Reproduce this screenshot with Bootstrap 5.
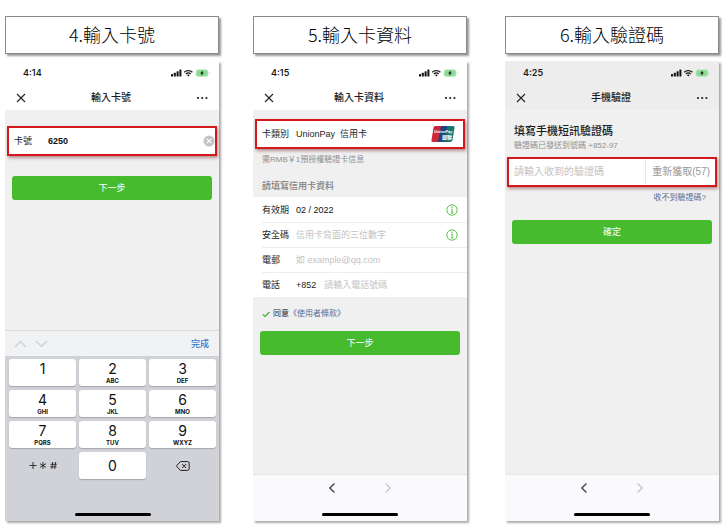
<!DOCTYPE html>
<html lang="zh-Hant">
<head>
<meta charset="utf-8">
<meta name="viewport" content="width=device-width, initial-scale=1">
<title>輸入卡資料</title>
<link href="https://cdn.jsdelivr.net/npm/bootstrap@5.3.0/dist/css/bootstrap.min.css" rel="stylesheet">
<style>
  body { font-family: "Liberation Sans", "Noto Sans CJK TC", sans-serif; font-size: 9px; line-height: 10px; color: #1c1c1c; background: #fff; }
  .steps { display: grid; grid-template-columns: minmax(0,1fr) 34px minmax(0,1fr) 38px minmax(0,1fr); padding: 16px 9px 6px 5px; }
  .step:nth-child(1) { grid-column: 1; }
  .step:nth-child(2) { grid-column: 3; }
  .step:nth-child(3) { grid-column: 5; }
  .step { gap: 7px; }
  .step-title { font-family: "Noto Sans CJK TC", sans-serif; font-weight: 300; font-size: 18px; line-height: 20px; height: 38px; padding-bottom: 2px; border: 1px solid #8a8a8a; box-shadow: 2px 2px 2px #999; color: #000; }
  .phone { background: #f0f0f0; box-shadow: 2px 2px 2px #aaa; }
  .topbar { background: #fff; }
  .topbar.plain { background: #ededed; }
  .statusbar { height: 24px; padding: 0 9px 0 18px; font: 600 9px/10px Inter, sans-serif; }
  .titlebar { height: 25px; padding: 0 11px; }
  .titlebar h2 { font-size: 10px; line-height: 12px; font-weight: 500; }
  .bare { border: 0; background: none; padding: 0; color: inherit; display: flex; align-items: center; justify-content: center; }
  .marked { height: 30px; margin: 0 2px; border: 2px solid #d3191c; background: #fff; box-shadow: 1px 2px 3px rgba(120,50,50,.5); padding-left: 5px; }
  .s1 { margin-top: 16px; } .s2 { margin-top: 9px; } .s3 { margin-top: 6px; }
  .lbl { width: 34px; flex: none; }
  .entry { border: 0; padding: 0; background: none; outline: 0; min-width: 0; width: 100%; color: #111; line-height: 14px; height: 14px; }
  .entry::placeholder { color: #c3c3c3; opacity: 1; }
  .go { height: 24px; margin: 0 7px; padding: 0; font-size: 9px; line-height: 12px; border: 0; border-radius: 3px; background: #46bb2e; color: #fff; }
  .go:hover { background: #3eaa28; color: #fff; }
  .b1 { margin-top: 20px; } .b2 { margin-top: 12px; } .b3 { margin-top: 17px; }
  .note { font-size: 8px; color: #8f8f8f; }
  .cardnote { margin: 6px 0 0; }
  .inset { padding-left: 9px; padding-right: 9px; }
  .form-rows { background: #fff; padding-left: 9px; }
  .form-row { height: 25px; padding-right: 9px; }
  .form-row + .form-row { border-top: 1px solid #ededed; }
  .formhead { font-size: 9px; line-height: 10px; color: #808080; margin: 16px 0 6px; }
  .consent { font-size: 8px; margin-top: 12px; gap: 3px; }
  .consent input { appearance: none; width: 8px; height: 8px; margin: 0; background: none; }
  .tickbox { position: relative; width: 8px; height: 8px; }
  .tickbox svg { position: absolute; inset: 0; pointer-events: none; }
  .legal { color: #5b6c92; text-decoration: none; }
  .bigtext { font-size: 11px; line-height: 14px; font-weight: 500; margin: 14px 0 3px; }
  .code { font-size: 10px; }
  .resend { font-size: 10px; color: #999; border-left: 1px solid #e8e8e8; flex: none; padding: 0 5px 0 6px; }
  .accessory { height: 26px; background: #f1f2f4; border-top: 1px solid #dcdcdc; padding: 0 10px 0 9px; color: #c9cacd; }
  .done { color: #2f7bd0; font-size: 9px; font-weight: 500; }
  .keypad { background: #d1d2d7; padding: 3px 3px 5px 4px; height: 165px; }
  .keys { display: grid; grid-template-columns: repeat(3, minmax(0,1fr)); grid-auto-rows: 27px; gap: 4px 3px; }
  .key { font: 400 14px/17px Inter, sans-serif; flex-direction: column; border-radius: 3px; color: #111; }
  .key.solid { background: #fff; box-shadow: 0 1px 1px #a5a6aa; }
  .key small { font: 700 6px/8px Inter, sans-serif; height: 8px; }
  .browserbar { height: 47px; background: #fafafc; border-top: 1px solid #e6e6e8; padding: 7px 0 5px; }
  .arrows { gap: 46px; }
  .homebar { width: 76px; height: 3px; border-radius: 2px; background: #000; }
</style>
<script src="https://cdn.jsdelivr.net/npm/bootstrap@5.3.0/dist/js/bootstrap.bundle.min.js"></script>
</head>
<body>
<svg class="d-none" aria-hidden="true">
  <symbol id="status" viewBox="0 0 39 10">
    <g fill="#111"><rect x="0" y="6" width="2" height="2.5" rx=".5"/><rect x="2.8" y="4.8" width="2" height="3.7" rx=".5"/><rect x="5.6" y="3.2" width="2" height="5.3" rx=".5"/><rect x="8.4" y="1.5" width="2" height="7" rx=".5"/></g>
    <g fill="none" stroke="#111" stroke-width="1.3"><path d="M13.2 4.2a6 6 0 0 1 8.2 0"/><path d="M14.9 6a3.6 3.6 0 0 1 4.8 0"/></g><path d="M15.9 7.1a2.1 2.1 0 0 1 2.8 0L17.3 8.6z" fill="#111"/>
    <rect x="25" y="1.8" width="12" height="6.6" rx="2" fill="#8bdc94" stroke="#bfe8c3" stroke-width=".8"/><path d="M38 3.8q1 1.2 0 2.6z" fill="#9ad9a0"/><path d="M31.6 2.2 29.2 5.4h1.5L30.3 8l2.5-3.4h-1.5z" fill="#111"/>
  </symbol>
  <symbol id="close" viewBox="0 0 10 10"><path d="M1 1l8 8M9 1 1 9" stroke="#222" stroke-width="1.1" fill="none"/></symbol>
  <symbol id="dots" viewBox="0 0 12 4"><g fill="#222"><circle cx="2" cy="2" r="1.1"/><circle cx="6.2" cy="2" r="1.1"/><circle cx="10.4" cy="2" r="1.1"/></g></symbol>
  <symbol id="info" viewBox="0 0 12 12"><circle cx="6" cy="6" r="5.2" fill="none" stroke="#5cc04c"/><path d="M5 5.2h1.2v3.6M4.8 8.9h2.7" fill="none" stroke="#5cc04c"/><circle cx="6" cy="3.3" r=".75" fill="#5cc04c"/></symbol>
  <symbol id="left" viewBox="0 0 10 12"><path d="M7.5 1.5 2.8 6l4.7 4.5" fill="none" stroke="#444" stroke-width="1.4"/></symbol>
  <symbol id="right" viewBox="0 0 10 12"><path d="M2.5 1.5 7.2 6l-4.7 4.5" fill="none" stroke="#c3c3c6" stroke-width="1.2"/></symbol>
</svg>

<main class="steps min-vh-100">
  <section class="step d-flex flex-column">
    <h1 class="step-title d-flex align-items-center justify-content-center m-0">4.輸入卡號</h1>
    <div class="phone d-flex flex-column flex-grow-1">
      <header class="topbar">
        <div class="statusbar d-flex align-items-center justify-content-between"><span>4:14</span><svg width="39" height="10"><use href="#status"/></svg></div>
        <div class="titlebar d-flex align-items-center justify-content-between"><button class="bare" aria-label="關閉"><svg width="10" height="10"><use href="#close"/></svg></button><h2 class="m-0">輸入卡號</h2><button class="bare" aria-label="更多"><svg width="12" height="4"><use href="#dots"/></svg></button></div>
      </header>
      <div class="marked s1 d-flex align-items-center">
        <label class="lbl" for="cardno">卡號</label>
        <input class="entry fw-bold" id="cardno" value="6250">
        <button class="bare flex-shrink-0" aria-label="清除"><svg width="12" height="12" viewBox="0 0 12 12"><circle cx="6" cy="6" r="5.5" fill="#c4c4c6"/><path d="M3.8 3.8l4.4 4.4M8.2 3.8 3.8 8.2" stroke="#fff" stroke-width="1.1"/></svg></button>
      </div>
      <button class="btn go b1">下一步</button>
      <div class="mt-auto">
        <div class="accessory d-flex align-items-center">
          <button class="bare me-2" aria-label="上一項"><svg width="13" height="8" viewBox="0 0 13 8"><path d="M1 7l5.5-5.5L12 7" fill="none" stroke="currentColor" stroke-width="1.1"/></svg></button>
          <button class="bare" aria-label="下一項"><svg width="13" height="8" viewBox="0 0 13 8"><path d="M1 1l5.5 5.5L12 1" fill="none" stroke="currentColor" stroke-width="1.1"/></svg></button>
          <button class="bare done ms-auto">完成</button>
        </div>
        <div class="keypad d-flex flex-column justify-content-between">
          <div class="keys">
            <button class="bare key solid">1<small></small></button>
            <button class="bare key solid">2<small>ABC</small></button>
            <button class="bare key solid">3<small>DEF</small></button>
            <button class="bare key solid">4<small>GHI</small></button>
            <button class="bare key solid">5<small>JKL</small></button>
            <button class="bare key solid">6<small>MNO</small></button>
            <button class="bare key solid">7<small>PQRS</small></button>
            <button class="bare key solid">8<small>TUV</small></button>
            <button class="bare key solid">9<small>WXYZ</small></button>
            <button class="bare key" aria-label="符號"><svg width="28" height="9" viewBox="0 0 28 9"><g fill="none" stroke="#222" stroke-width=".9"><path d="M.5 4.5h7M4 1v7M14 1v7M11 2.7l6 3.6M17 2.7l-6 3.6M23.8 1l-1 7M26.6 1l-1 7M21.5 3.3h6.3M21.2 5.8h6.3"/></g></svg></button>
            <button class="bare key solid">0</button>
            <button class="bare key" aria-label="刪除"><svg width="14" height="10" viewBox="0 0 14 10"><path d="M4.4.6h7.2q1.6 0 1.6 1.6v5.6q0 1.6-1.6 1.6H4.4L.8 5.6q-.5-.6 0-1.2zM6.2 3l4 4M10.2 3l-4 4" fill="none" stroke="#222"/></svg></button>
          </div>
          <div class="homebar mx-auto"></div>
        </div>
      </div>
    </div>
  </section>

  <section class="step d-flex flex-column">
    <h1 class="step-title d-flex align-items-center justify-content-center m-0">5.輸入卡資料</h1>
    <div class="phone d-flex flex-column flex-grow-1">
      <header class="topbar">
        <div class="statusbar d-flex align-items-center justify-content-between"><span>4:15</span><svg width="39" height="10"><use href="#status"/></svg></div>
        <div class="titlebar d-flex align-items-center justify-content-between"><button class="bare" aria-label="關閉"><svg width="10" height="10"><use href="#close"/></svg></button><h2 class="m-0">輸入卡資料</h2><button class="bare" aria-label="更多"><svg width="12" height="4"><use href="#dots"/></svg></button></div>
      </header>
      <div class="marked s2 d-flex align-items-center pe-2">
        <span class="lbl">卡類別</span><span>UnionPay&nbsp; 信用卡</span>
        <svg class="ms-auto" width="24" height="16" viewBox="0 0 24 16" role="img" aria-label="UnionPay 銀聯">
          <path d="M4 0h7L8 16H2Q0 16 .5 14L2.500 1.500Q3 0 4 0z" fill="#cf2538"/><path d="M10 0h7l-3 16H7z" fill="#1d447c"/><path d="M16.500 0H22q2 0 1.500 2l-2 12q-.5 2-2 2H13.500z" fill="#17776f"/>
          <text x="3" y="7" font-family="Liberation Sans" font-size="4" font-weight="700" font-style="italic" fill="#fff">UnionPay</text><text x="11" y="13" font-family="Noto Sans CJK TC" font-size="5" font-weight="700" fill="#fff">銀聯</text>
        </svg>
      </div>
      <p class="note inset cardnote">需RMB￥1預授權驗證卡信息</p>
      <h3 class="formhead inset">請填寫信用卡資料</h3>
      <div class="form-rows">
        <div class="form-row d-flex align-items-center"><label class="lbl" for="exp">有效期</label><input class="entry" id="exp" value="02 / 2022"><button class="bare" aria-label="有效期說明"><svg width="12" height="12"><use href="#info"/></svg></button></div>
        <div class="form-row d-flex align-items-center"><label class="lbl" for="cvv">安全碼</label><input class="entry" id="cvv" placeholder="信用卡背面的三位數字"><button class="bare" aria-label="安全碼說明"><svg width="12" height="12"><use href="#info"/></svg></button></div>
        <div class="form-row d-flex align-items-center"><label class="lbl" for="mail">電郵</label><input class="entry" id="mail" type="email" placeholder="如 example@qq.com"></div>
        <div class="form-row d-flex align-items-center"><label class="lbl" for="tel">電話</label><span class="me-2">+852</span><input class="entry" id="tel" type="tel" placeholder="請輸入電話號碼"></div>
      </div>
      <div class="consent inset d-flex align-items-center">
        <span class="tickbox d-flex"><input type="checkbox" id="agree" checked><svg width="8" height="8" viewBox="0 0 8 8"><path d="M.8 4.300 3 6.500 7.500 2" fill="none" stroke="#3fae2a" stroke-width="1.200"/></svg></span>
        <span><label for="agree">同意</label><a class="legal" href="#">《使用者條款》</a></span>
      </div>
      <button class="btn go b2">下一步</button>
      <nav class="browserbar mt-auto d-flex flex-column justify-content-between align-items-center">
        <div class="arrows d-flex"><button class="bare" aria-label="返回"><svg width="10" height="12"><use href="#left"/></svg></button><button class="bare" aria-label="前進"><svg width="10" height="12"><use href="#right"/></svg></button></div>
        <div class="homebar"></div>
      </nav>
    </div>
  </section>

  <section class="step d-flex flex-column">
    <h1 class="step-title d-flex align-items-center justify-content-center m-0">6.輸入驗證碼</h1>
    <div class="phone d-flex flex-column flex-grow-1">
      <header class="topbar plain">
        <div class="statusbar d-flex align-items-center justify-content-between"><span>4:25</span><svg width="39" height="10"><use href="#status"/></svg></div>
        <div class="titlebar d-flex align-items-center justify-content-between"><button class="bare" aria-label="關閉"><svg width="10" height="10"><use href="#close"/></svg></button><h2 class="m-0">手機驗證</h2><button class="bare" aria-label="更多"><svg width="12" height="4"><use href="#dots"/></svg></button></div>
      </header>
      <h3 class="bigtext inset">填寫手機短訊驗證碼</h3>
      <p class="note inset m-0">驗證碼已發送到號碼 +852-97</p>
      <div class="marked s3 d-flex align-items-stretch">
        <input class="entry code my-auto" aria-label="驗證碼" placeholder="請輸入收到的驗證碼">
        <button class="bare resend">重新獲取(57)</button>
      </div>
      <div class="note inset s3 text-end"><a class="legal me-1" href="#">收不到驗證碼?</a></div>
      <button class="btn go b3">確定</button>
      <nav class="browserbar mt-auto d-flex flex-column justify-content-between align-items-center">
        <div class="arrows d-flex"><button class="bare" aria-label="返回"><svg width="10" height="12"><use href="#left"/></svg></button><button class="bare" aria-label="前進"><svg width="10" height="12"><use href="#right"/></svg></button></div>
        <div class="homebar"></div>
      </nav>
    </div>
  </section>
</main>
</body>
</html>
